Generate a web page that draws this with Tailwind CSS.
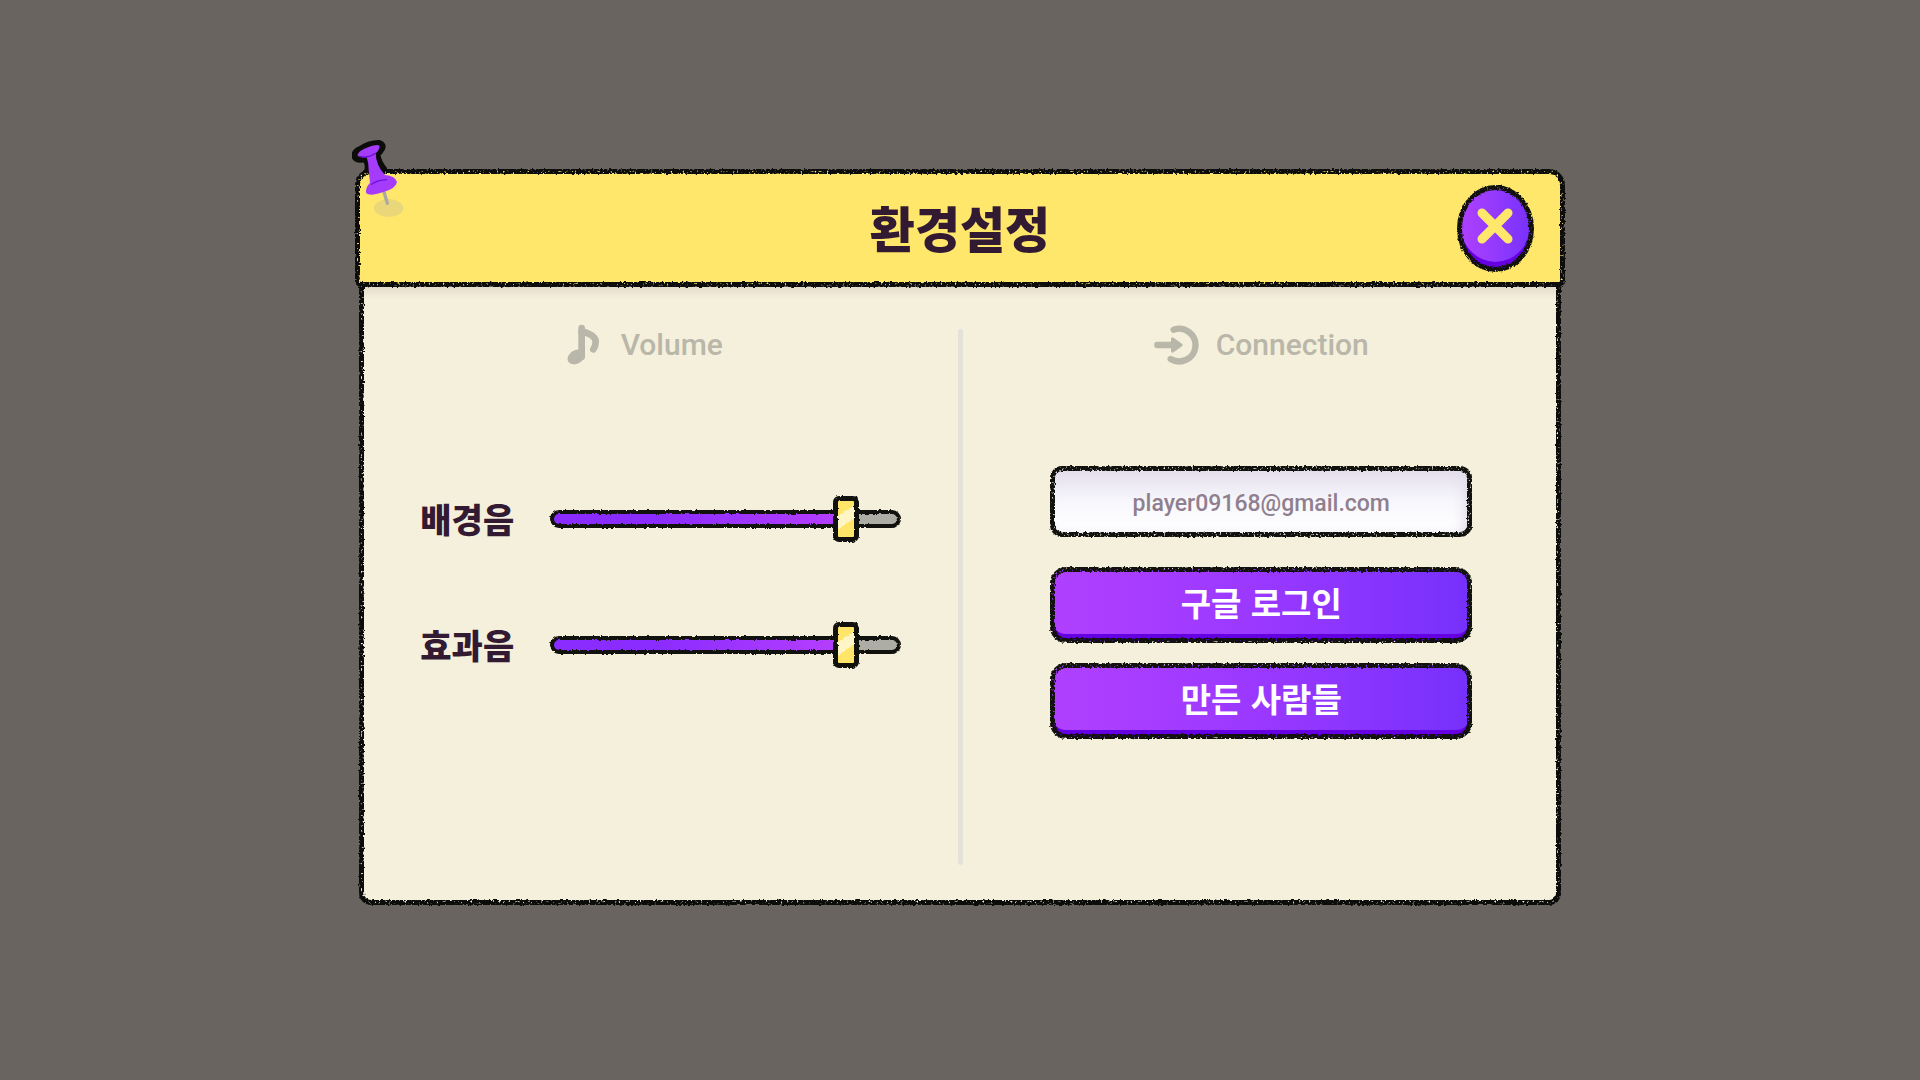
<!DOCTYPE html>
<html lang="ko">
<head>
<meta charset="utf-8">
<meta name="viewport" content="width=device-width, initial-scale=1">
<title>환경설정</title>
<script src="https://cdn.jsdelivr.net/npm/@tailwindcss/browser@4"></script>
</head>
<body class="min-h-screen bg-[#696460] font-['Noto_Sans_CJK_KR',sans-serif] text-[#331a33]">
<!-- Crayon edge filters: "rough" wobbles and speckles, "wobble" only wobbles -->
<svg class="absolute size-0" aria-hidden="true">
  <filter id="rough" x="-5%" y="-10%" width="110%" height="120%" color-interpolation-filters="sRGB">
    <feTurbulence type="fractalNoise" baseFrequency="0.35" numOctaves="2" seed="4" result="n"/>
    <feDisplacementMap in="SourceGraphic" in2="n" scale="3" xChannelSelector="R" yChannelSelector="G" result="d"/>
    <feTurbulence type="fractalNoise" baseFrequency="0.5" numOctaves="2" seed="9"/>
    <feColorMatrix values="0 0 0 0 0  0 0 0 0 0  0 0 0 0 0  -6 0 0 0 4.6" result="s"/>
    <feComposite in="d" in2="s" operator="in"/>
  </filter>
  <filter id="wobble" x="-5%" y="-10%" width="110%" height="120%" color-interpolation-filters="sRGB">
    <feTurbulence type="fractalNoise" baseFrequency="0.35" numOctaves="2" seed="7" result="n"/>
    <feDisplacementMap in="SourceGraphic" in2="n" scale="3" xChannelSelector="R" yChannelSelector="G"/>
  </filter>
</svg>

<main class="flex justify-center px-4 pt-[169px] pb-16">
  <section role="dialog" aria-labelledby="title" class="w-full max-w-[1210px]">
    <header class="relative z-10 grid min-h-[118px] grid-cols-[1fr_auto_1fr] items-center rounded-t-2xl border-2 border-transparent bg-[#ffe76b] bg-clip-padding px-[29px]">
      <span class="pointer-events-none absolute -inset-0.5 rounded-t-2xl rounded-b-md border-5 border-[#0c0c0a] [filter:url(#rough)]"></span>
      <svg class="pointer-events-none absolute -top-[41px] -left-[17px] h-[100px] w-[120px]" viewBox="0 0 360 300" aria-hidden="true">
        <ellipse cx="146" cy="234" rx="44" ry="27" fill="#e9d779"/>
        <path d="M132 186 L142 220" stroke="#aaa9a3" stroke-width="10" stroke-linecap="round"/>
        <path d="M80 128 Q88 104 76 88 Q46 92 43 78 Q42 64 62 56 Q90 38 118 39 Q132 44 126 56 Q120 68 112 72 Q114 96 136 122" fill="none" stroke="#0c0c0a" stroke-width="18" stroke-linejoin="round" filter="url(#wobble)"/>
        <path d="M54 74 Q56 62 84 52 Q112 42 118 47 Q120 58 107 70 Q108 108 135 135 Q166 138 171 156 Q168 176 128 187 Q90 200 79 190 Q74 176 90 158 Q88 140 86 120 Q86 98 80 82 Q58 84 54 74 Z" fill="#a63cfb"/>
        <path d="M58 79 Q84 86 106 70 M95 163 Q112 150 140 149" fill="none" stroke="#6c10d8" stroke-width="4" stroke-linecap="round"/>
      </svg>
      <h1 id="title" class="col-start-2 pb-1 text-[49px] leading-none font-black">환경설정</h1>
      <button type="button" aria-label="닫기" class="relative col-start-3 h-[87px] w-[77px] justify-self-end rounded-[50%] border-2 border-transparent bg-linear-to-r from-[#b040ff] to-[#7630fc] bg-clip-padding shadow-[inset_0_-8px_0_#6500e2]">
        <span class="absolute -inset-0.5 rounded-[50%] border-5 border-[#11110b] [filter:url(#rough)]"></span>
        <svg class="absolute top-[18px] left-[15px] size-[43px]" viewBox="0 0 43 43" aria-hidden="true"><path d="M8 8 34 34M34 8 8 34" stroke="#ffe76b" stroke-width="9" stroke-linecap="round"/></svg>
      </button>
    </header>

    <div class="relative mx-1 grid min-h-[618px] grid-cols-[1fr_5px_1fr] rounded-b-xl border-2 border-t-0 border-transparent bg-[#f5f0db] bg-[linear-gradient(#e4dccb,#f5f0db_12px)] bg-clip-padding px-[3px]">
      <span class="pointer-events-none absolute -inset-x-0.5 top-0 -bottom-0.5 rounded-b-xl border-5 border-t-0 border-[#0c0c0a] [filter:url(#rough)]"></span>

      <section aria-labelledby="volume" class="relative pt-8">
        <div class="flex h-13 items-center justify-center gap-5 pr-8 text-[#b9b6aa]">
          <svg class="h-[42px] w-[34px]" viewBox="0 0 102 126" aria-hidden="true">
            <ellipse cx="27" cy="99" rx="27" ry="20" transform="rotate(-32 27 99)" fill="currentColor"/>
            <path d="M44 98 V12" stroke="currentColor" stroke-width="20" stroke-linecap="round"/>
            <path d="M44 22 Q88 34 86 55 Q86 66 79 76" fill="none" stroke="currentColor" stroke-width="20" stroke-linecap="round"/>
          </svg>
          <h2 id="volume" class="font-['Roboto',sans-serif] text-[30px] leading-none font-medium">Volume</h2>
        </div>
        <div class="mt-[125px] flex flex-col items-center gap-20">
          <div class="flex h-[46px] items-center gap-9">
            <label for="bgm" class="text-[34px] leading-none font-black">배경음</label>
            <input id="bgm" type="range" min="0" max="100" value="88" class="h-[46px] w-[351px] appearance-none bg-transparent [filter:url(#wobble)] [&::-webkit-slider-runnable-track]:h-[18px] [&::-webkit-slider-runnable-track]:rounded-full [&::-webkit-slider-runnable-track]:border-4 [&::-webkit-slider-runnable-track]:border-[#11110d] [&::-webkit-slider-runnable-track]:bg-[linear-gradient(90deg,#8a2cff,#8a2cff_30%,#b33dff_80%,#b33dff_86%,#adada5_86%)] [&::-webkit-slider-thumb]:-mt-[18px] [&::-webkit-slider-thumb]:h-[46px] [&::-webkit-slider-thumb]:w-[26px] [&::-webkit-slider-thumb]:appearance-none [&::-webkit-slider-thumb]:rounded-md [&::-webkit-slider-thumb]:border-5 [&::-webkit-slider-thumb]:border-[#11110d] [&::-webkit-slider-thumb]:bg-[linear-gradient(145deg,#ffe568_32%,#fff5c6_33%,#fff5c6_60%,#ffe568_61%)]">
          </div>
          <div class="flex h-[46px] items-center gap-9">
            <label for="sfx" class="text-[34px] leading-none font-black">효과음</label>
            <input id="sfx" type="range" min="0" max="100" value="88" class="h-[46px] w-[351px] appearance-none bg-transparent [filter:url(#wobble)] [&::-webkit-slider-runnable-track]:h-[18px] [&::-webkit-slider-runnable-track]:rounded-full [&::-webkit-slider-runnable-track]:border-4 [&::-webkit-slider-runnable-track]:border-[#11110d] [&::-webkit-slider-runnable-track]:bg-[linear-gradient(90deg,#8a2cff,#8a2cff_30%,#b33dff_80%,#b33dff_86%,#adada5_86%)] [&::-webkit-slider-thumb]:-mt-[18px] [&::-webkit-slider-thumb]:h-[46px] [&::-webkit-slider-thumb]:w-[26px] [&::-webkit-slider-thumb]:appearance-none [&::-webkit-slider-thumb]:rounded-md [&::-webkit-slider-thumb]:border-5 [&::-webkit-slider-thumb]:border-[#11110d] [&::-webkit-slider-thumb]:bg-[linear-gradient(145deg,#ffe568_32%,#fff5c6_33%,#fff5c6_60%,#ffe568_61%)]">
          </div>
        </div>
      </section>

      <div class="mt-[42px] mb-[38px] rounded-full bg-[#e4e2d8]"></div>

      <section aria-labelledby="connection" class="relative pt-8 pl-1">
        <div class="flex h-13 items-center justify-center gap-4 text-[#b9b6aa]">
          <svg class="h-10 w-[46px]" viewBox="0 0 138 120" fill="none" stroke="currentColor" stroke-linecap="round" stroke-linejoin="round" aria-hidden="true">
            <path d="M59 14 A49 49 0 1 1 50 102" stroke-width="19"/>
            <path d="M10 60 H62" stroke-width="19"/>
            <path d="M56 42 V78 L81 60 Z" fill="currentColor" stroke-width="10"/>
          </svg>
          <h2 id="connection" class="font-['Roboto',sans-serif] text-[30px] leading-none font-medium">Connection</h2>
        </div>
        <div class="mx-auto mt-[95px] flex w-[422px] max-w-full flex-col">
          <div class="relative h-[71px]">
            <input type="email" aria-label="이메일" value="player09168@gmail.com" class="size-full rounded-xl border-2 border-transparent bg-linear-to-b from-[#e2ddea] via-[#f8f7fc] via-50% to-white bg-clip-padding pt-1 text-center font-['Roboto',sans-serif] text-[23px] font-medium text-[#8f7f8f] shadow-[inset_-6px_0_12px_#e2ddea]">
            <span class="pointer-events-none absolute inset-0 rounded-xl border-5 border-[#11110d] [filter:url(#rough)]"></span>
          </div>
          <button type="button" class="relative mt-[30px] h-[76px] rounded-2xl border-2 border-transparent bg-linear-to-r from-[#b040ff] via-[#9a38ff] to-[#7630fc] bg-clip-padding pb-1.5 text-[33px] leading-none font-bold text-white shadow-[inset_0_-7px_0_#6500e2]">
            구글 로그인
            <span class="absolute -inset-0.5 rounded-2xl border-5 border-[#11110d] [filter:url(#rough)]"></span>
          </button>
          <button type="button" class="relative mt-5 h-[76px] rounded-2xl border-2 border-transparent bg-linear-to-r from-[#b040ff] via-[#9a38ff] to-[#7630fc] bg-clip-padding pb-1.5 text-[33px] leading-none font-bold text-white shadow-[inset_0_-7px_0_#6500e2]">
            만든 사람들
            <span class="absolute -inset-0.5 rounded-2xl border-5 border-[#11110d] [filter:url(#rough)]"></span>
          </button>
        </div>
      </section>
    </div>
  </section>
</main>
</body>
</html>
